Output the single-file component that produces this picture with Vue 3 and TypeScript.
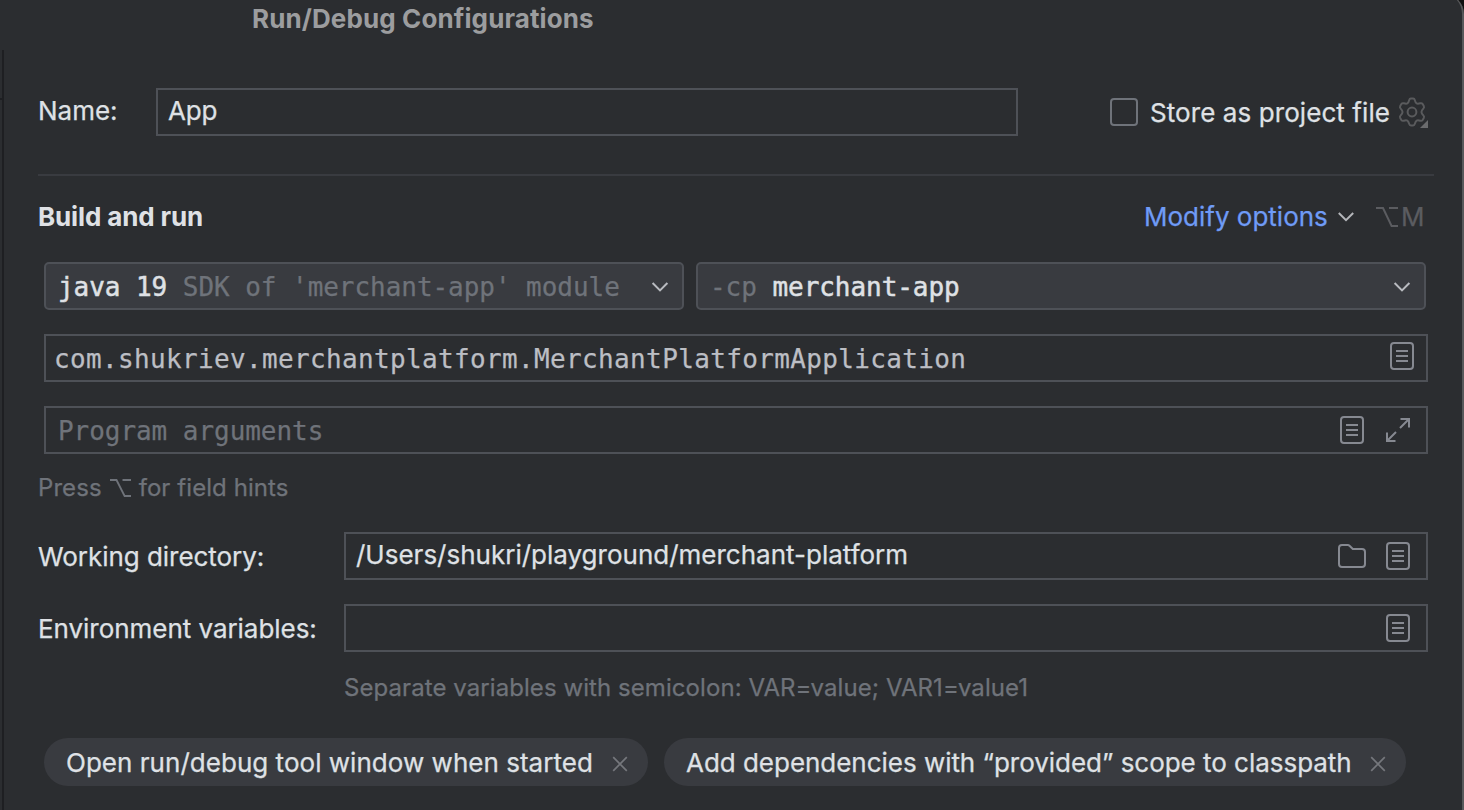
<script setup lang="ts">
import { ref } from 'vue'

const name = ref('App')
const mainClass = ref('com.shukriev.merchantplatform.MerchantPlatformApplication')
const workingDir = ref('/Users/shukri/playground/merchant-platform')
const tags = ref([
  { text: 'Open run/debug tool window when started', cls: 'tag-open' },
  { text: 'Add dependencies with “provided” scope to classpath', cls: 'tag-deps' },
])
</script>

<template>
  <div class="screen">
    <div class="dialog">
      <header class="titlebar"><span class="title">Run/Debug Configurations</span></header>
      <div class="body">
        <aside class="gutter"><div class="gutter-mark"></div></aside>
        <main class="form">
          <div class="name-row">
            <label class="label name-label">Name:</label>
            <div class="field name-field"><span class="t-app">{{ name }}</span></div>
            <div class="checkbox"></div>
            <span class="store">Store as project file</span>
            <svg class="gear" width="32" height="32" viewBox="0 0 32 32" fill="none">
              <path d="M13.4 4.3Q13.8 2.8 15 2.8H17Q18.2 2.8 18.6 4.3Q19.2 6.6 20.2 7.2Q21.2 7.8 23.5 7.1Q25 6.7 25.7 7.8L26.7 9.5Q27.4 10.8 26.3 11.9Q24.6 13.6 24.6 15Q24.6 16.4 26.3 18.1Q27.4 19.2 26.7 20.5L25.7 22.2Q25 23.3 23.5 22.9Q21.2 22.2 20.2 22.8Q19.2 23.4 18.6 25.7Q18.2 27.2 17 27.2H15Q13.8 27.2 13.4 25.7Q12.8 23.4 11.8 22.8Q10.8 22.2 8.5 22.9Q7 23.3 6.3 22.2L5.3 20.5Q4.6 19.2 5.7 18.1Q7.4 16.4 7.4 15Q7.4 13.6 5.7 11.9Q4.6 10.8 5.3 9.5L6.3 7.8Q7 6.7 8.5 7.1Q10.8 7.8 11.8 7.2Q12.8 6.6 13.4 4.3Z" transform="translate(-1.6 -1.5) scale(1.1)" stroke="#5a5b5d" stroke-width="1.8" />
              <circle cx="16" cy="15" r="4.4" stroke="#5a5b5d" stroke-width="2" />
              <path d="M32 23V31H24Z" fill="#6a6b6d" />
            </svg>
          </div>
          <div class="rule"></div>
          <div class="section-row">
            <h2 class="heading">Build and run</h2>
            <div class="modify">Modify options</div>
            <svg class="modify-chev" width="16" height="10" viewBox="0 0 16 10" fill="none"><path d="M.8 1L8 8.2L15.2 1" stroke="#b4b6ba" stroke-width="2" /></svg>
            <div class="shortcut">
              <svg width="22" height="20" viewBox="0 0 22 20" fill="none"><path d="M0 1H7L15.6 19H22M13 1H22" stroke="#5b5c60" stroke-width="2" /></svg>
              <span>M</span>
            </div>
          </div>
          <div class="combo-row">
            <div class="combo sdk"><span class="mono"><span class="bright">java 19</span> SDK of 'merchant-app' module</span>
              <svg width="18" height="12" viewBox="0 0 18 12" fill="none"><path d="M1.6 2L9 9.4L16.4 2" stroke="#b9bbc0" stroke-width="2" /></svg>
            </div>
            <div class="combo cp"><span class="mono">-cp <span class="bright">merchant-app</span></span>
              <svg width="18" height="12" viewBox="0 0 18 12" fill="none"><path d="M1.6 2L9 9.4L16.4 2" stroke="#b9bbc0" stroke-width="2" /></svg>
            </div>
          </div>
          <div class="field wide main-class"><span class="mono main-text">{{ mainClass }}</span>
            <svg class="doc" width="24" height="28" viewBox="0 0 24 28" fill="none" stroke="#868991" stroke-width="2"><rect x="1" y="1" width="22" height="26" rx="3" /><path d="M6 9H18M6 14H18M6 19H18" /></svg>
          </div>
          <div class="field wide args"><span class="mono arg-text">Program arguments</span>
            <svg class="doc" width="24" height="28" viewBox="0 0 24 28" fill="none" stroke="#868991" stroke-width="2"><rect x="1" y="1" width="22" height="26" rx="3" /><path d="M6 9H18M6 14H18M6 19H18" /></svg>
            <svg class="expand" width="26" height="26" viewBox="0 0 26 26" fill="none" stroke="#868991" stroke-width="2"><path d="M15.5 2H24V10.5M24 2L15 11M2 15.5V24H10.5M2 24L11 15" /></svg>
          </div>
          <div class="hint press"><span>Press</span>
            <svg width="21" height="18" viewBox="0 0 21 18" fill="none"><path d="M0 1H6.5L14.6 17H21M12.5 1H21" stroke="#6f737a" stroke-width="1.8" /></svg>
            <span>for field hints</span>
          </div>
          <div class="pair dir">
            <label class="label">Working directory:</label>
            <div class="field"><span class="t-path">{{ workingDir }}</span>
              <svg class="folder" width="28" height="24" viewBox="0 0 28 24" fill="none" stroke="#868991" stroke-width="2"><path d="M1 4Q1 1 4 1H9.8Q10.8 1 11.5 1.7L14.8 5H24Q27 5 27 8V20Q27 23 24 23H4Q1 23 1 20Z" /></svg>
              <svg class="doc" width="24" height="28" viewBox="0 0 24 28" fill="none" stroke="#868991" stroke-width="2"><rect x="1" y="1" width="22" height="26" rx="3" /><path d="M6 9H18M6 14H18M6 19H18" /></svg>
            </div>
          </div>
          <div class="pair env">
            <label class="label">Environment variables:</label>
            <div class="field">
              <svg class="doc" width="24" height="28" viewBox="0 0 24 28" fill="none" stroke="#868991" stroke-width="2"><rect x="1" y="1" width="22" height="26" rx="3" /><path d="M6 9H18M6 14H18M6 19H18" /></svg>
            </div>
          </div>
          <div class="hint separate">Separate variables with semicolon: VAR=value; VAR1=value1</div>
          <div class="tags">
            <div v-for="tag in tags" :key="tag.cls" class="tag" :class="tag.cls">
              <span class="tag-text">{{ tag.text }}</span>
              <svg width="16" height="16" viewBox="0 0 16 16" fill="none"><path d="M1.2 1.2L14.8 14.8M14.8 1.2L1.2 14.8" stroke="#75777c" stroke-width="1.7" /></svg>
            </div>
          </div>
        </main>
      </div>
    </div>
  </div>
</template>

<style>
html, body { background: #000; overflow: hidden; }
</style>

<style scoped>
.screen { width: 1464px; height: 810px; overflow: hidden; background: #101010; font-family: Inter, "Liberation Sans", sans-serif; font-size: 26px; line-height: 32px; color: #dfe1e5; white-space: pre; -webkit-text-stroke: .25px currentColor; }
.screen * { box-sizing: border-box; }
.screen svg { display: block; flex: none; }
.dialog { width: 1464px; height: 836px; background: #2b2d30; border-right: 2px solid #57585a; border-top-right-radius: 20px; margin-top: -6px; padding-top: 6px; }
.titlebar { height: 50px; padding: 3px 0 0 252px; }
.title { font-weight: 700; color: #9c9d9f; letter-spacing: .11px; -webkit-text-stroke: 0; }
.body { display: flex; }
.gutter { width: 4px; height: 780px; border-right: 2px solid #1e1f22; flex: none; padding-top: 48px; }
.gutter-mark { height: 2px; background: #1e1f22; }
.form { width: 1430px; padding: 38px 0 0 34px; }
.field { height: 48px; border: 2px solid #4e5157; display: flex; align-items: center; }
.name-row { display: flex; height: 48px; align-items: center; }
.name-label { width: 118px; padding-bottom: 3px; }
.name-field { width: 862px; padding: 0 0 2px 10px; }
.t-app { letter-spacing: -.2px; }
.checkbox { width: 28px; height: 28px; border: 2px solid #6f737a; border-radius: 4px; margin-left: 92px; }
.store { width: 256px; padding-left: 12px; margin-top: 2px; letter-spacing: .08px; }
.gear { margin: 2px 0 0 2px; }
.rule { height: 2px; width: 1396px; margin-top: 38px; background: #393b40; }
.section-row { display: flex; height: 48px; margin-top: 17px; align-items: center; }
.heading { font-size: 26px; line-height: 32px; margin: 0; width: 1106px; font-weight: 700; letter-spacing: -.14px; -webkit-text-stroke: 0; }
.modify { width: 194px; color: #6f9bf6; }
.shortcut { display: flex; align-items: center; gap: 3px; margin-left: 22px; color: #5b5c60; }
.combo-row { display: flex; gap: 12px; margin: 21px 0 0 6px; }
.combo { display: flex; justify-content: space-between; align-items: center; height: 48px; background: #393b40; border: 2px solid #4e5157; border-radius: 5px; padding: 2px 13px 0 12px; }
.sdk { width: 640px; } .cp { width: 730px; }
.mono { font-family: "DejaVu Sans Mono", monospace; font-size: 26px; letter-spacing: -.05px; color: #6f737a; }
.bright { color: #dfe1e5; -webkit-text-stroke: .5px currentColor; }
.wide { width: 1384px; margin: 24px 0 0 6px; }
.doc { margin-left: auto; }
.main-class { padding: 0 12px 0 8px; }
.main-class .doc { margin-bottom: 4px; }
.main-text { letter-spacing: .35px; color: #bcbec4; margin-top: 2px; }
.args { padding: 0 15px 0 12px; }
.arg-text { margin-top: 2px; }
.expand { margin-left: 21px; }
.hint { font-size: 24px; line-height: 30px; color: #6f737a; letter-spacing: .07px; }
.press { display: flex; align-items: center; margin-top: 19px; height: 30px; }
.press svg { margin: 0 8px; }
.pair { display: grid; grid-template-columns: 306px 1084px; height: 48px; align-items: center; }
.pair .label { padding-top: 2px; letter-spacing: -.04px; }
.pair .field { padding: 0 16px 0 10px; }
.dir { margin-top: 29px; } .env { margin-top: 24px; }
.folder { margin-left: auto; }
.folder + .doc { margin-left: 20px; }
.t-path { margin-top: -2px; }
.separate { margin: 21px 0 0 306px; }
.tags { display: flex; gap: 16px; margin: 35px 0 0 6px; }
.tag { height: 48px; border-radius: 24px; background: #393b40; display: flex; align-items: center; justify-content: space-between; padding: 0 20px 0 22px; }
.tag-text { margin-top: 2px; }
.tag svg { margin-top: 3px; }
.tag-open { width: 604px; letter-spacing: .03px; } .tag-deps { width: 742px; letter-spacing: -.03px; }
</style>
